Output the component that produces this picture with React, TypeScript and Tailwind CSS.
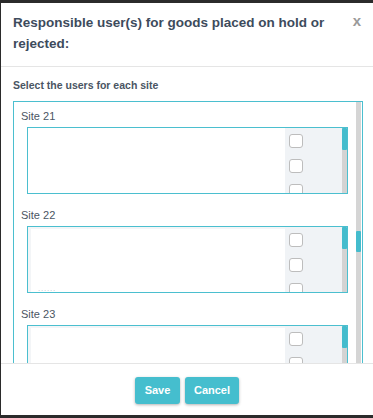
import React from "react";

const sites = ["Site 21", "Site 22", "Site 23"];

function SiteBox({ name, framed, dots }: { name: string; framed: boolean; dots: boolean }) {
  return (
    <div className="pl-[7px] pb-[15px]">
      <div className="h-[13px] text-[11px] leading-[13px] text-[#4a5563]">{name}</div>
      <div className="ml-[6px] mt-[4px] flex h-[67px] w-[321px] border border-[#4bbfcf]">
        <div className={framed ? "flex-1 bg-[#f3f5f7] pl-[3px] pt-[2px]" : "flex-1 bg-white"}>
          <div className="relative h-full w-full overflow-hidden bg-white">
            {dots && (
              <div className="absolute bottom-0 left-[7px] text-[8px] leading-[6px] tracking-widest text-[#b8bec6]">
                ......
              </div>
            )}
          </div>
        </div>
        <div className="flex w-[57px] flex-col gap-[11px] overflow-hidden bg-[#f0f3f6] pl-[4px] pt-[6px]">
          {[0, 1, 2].map((i) => (
            <div
              key={i}
              className="h-[14px] w-[14px] shrink-0 rounded-[3px] border border-[#bdbdbd] bg-white"
            />
          ))}
        </div>
        <div className="flex w-[5px] flex-col bg-[#d3d3d3]">
          <div className="h-[22px] rounded-[1px] bg-[#44bccd]" />
        </div>
      </div>
    </div>
  );
}

export default function App() {
  return (
    <div
      className="h-[418px] w-[373px] bg-[#2b2b2b] pl-px pt-[3px] pb-[3px]"
      style={{ fontFamily: '"Liberation Sans", Arial, sans-serif' }}
    >
      <div className="flex h-full flex-col bg-white">
        {/* Header */}
        <div className="relative border-b border-[#e5e5e5] pl-[12px] pt-[9px] pb-[12px]">
          <h2 className="w-[330px] text-[13.5px] font-bold leading-[21px] text-[#3d4b5c]">
            Responsible user(s) for goods placed on hold or rejected:
          </h2>
          <span className="absolute right-[12px] top-[7px] text-[15px] font-bold leading-[21px] text-[#9a9a9a]">
            x
          </span>
        </div>

        {/* Body */}
        <div className="flex-1 overflow-hidden pl-[12px] pt-[12px]">
          <div className="mb-[9px] text-[10.5px] font-bold leading-[13px] text-[#4a5563]">
            Select the users for each site
          </div>
          <div className="flex h-[300px] w-[350px] border border-[#4bbfcf]">
            <div className="flex-1 pt-[8px]">
              {sites.map((s, i) => (
                <SiteBox key={s} name={s} framed={i > 0} dots={i === 1} />
              ))}
            </div>
            <div className="mr-[1px] flex w-[5px] flex-col bg-[#d5d5d5]">
              <div className="mt-[129px] h-[21px] rounded-[1px] bg-[#44bccd]" />
            </div>
          </div>
        </div>

        {/* Footer */}
        <div className="flex h-[52px] justify-center gap-[5px] border-t border-[#e5e5e5] pt-[13px]">
          <button className="h-[27px] w-[45px] rounded-[3px] bg-[#45bece] text-[11px] font-bold text-white shadow-[0_1px_3px_rgba(0,0,0,0.3)]">
            Save
          </button>
          <button className="h-[27px] w-[54px] rounded-[3px] bg-[#45bece] text-[11px] font-bold text-white shadow-[0_1px_3px_rgba(0,0,0,0.3)]">
            Cancel
          </button>
        </div>
      </div>
    </div>
  );
}
